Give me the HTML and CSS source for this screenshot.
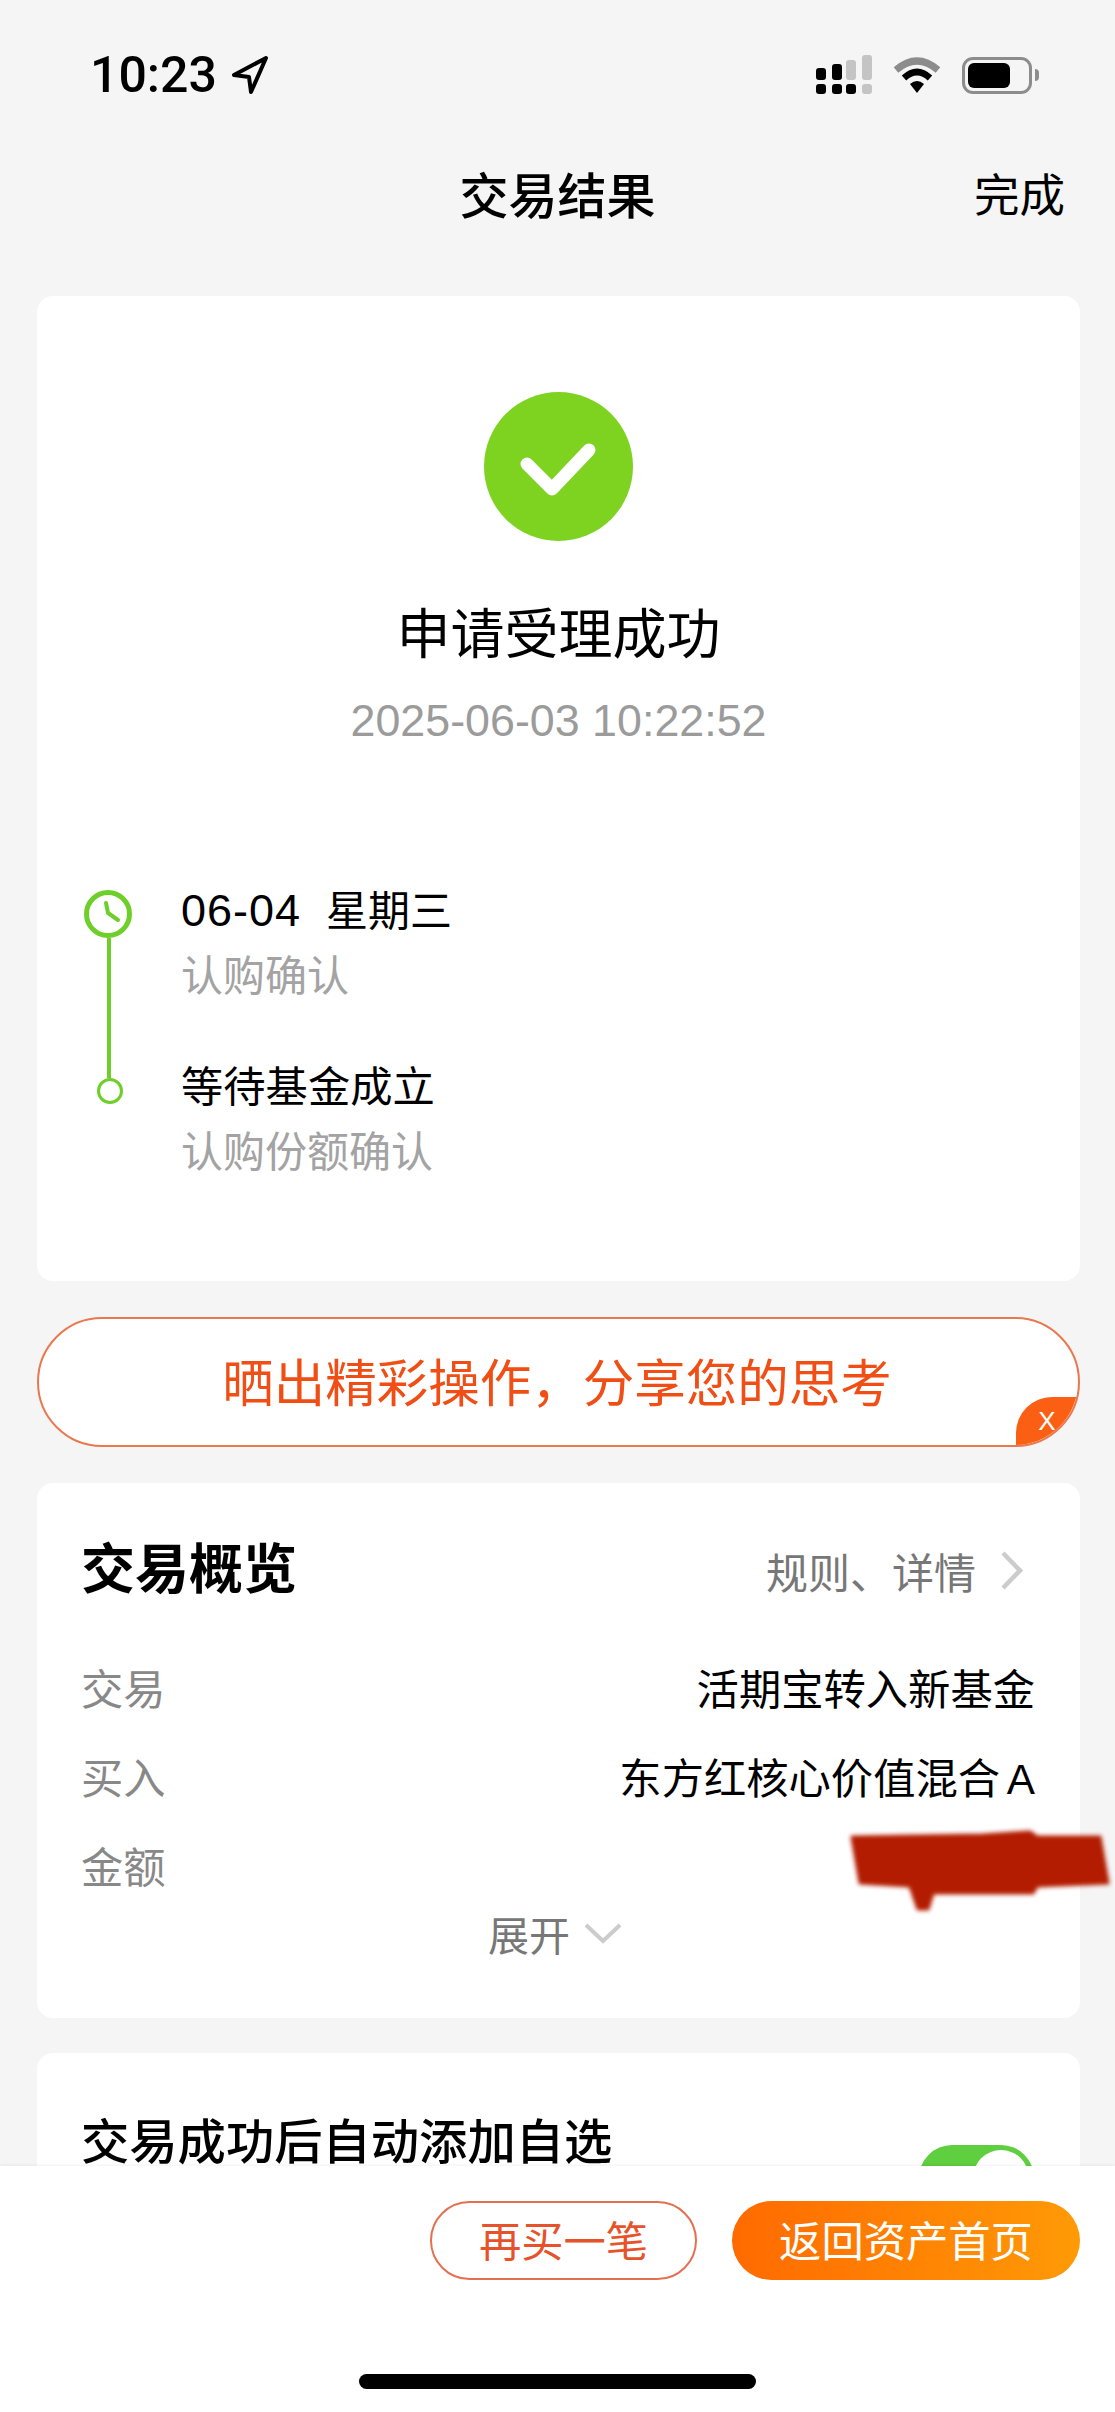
FILE: index.html
```html
<!DOCTYPE HTML>
<html lang="zh-CN">
<head>
<meta http-equiv="Content-Type" content="text/html; charset=utf-8">
<title>交易结果</title>
<link rel="stylesheet" href="styles.css">
</head>

<body>
<div class="page">

	<div class="statusBar">
		<div class="clock">
			<span>10:23</span>
			<svg class="arrow" width="38" height="38" viewBox="0 0 38 38"><path d="M35 2 L3 19 L18 21 L20 36 Z" fill="none" stroke="#000" stroke-width="4" stroke-linejoin="round"/></svg>
		</div>
		<div class="statusIcons">
			<svg width="56" height="40" viewBox="0 0 56 40">
				<rect x="0" y="29" width="10" height="10" rx="3"/>
				<rect x="16" y="29" width="10" height="10" rx="3"/>
				<rect x="30" y="29" width="10" height="10" rx="3"/>
				<rect x="46" y="29" width="10" height="10" rx="3" fill="#c4c4c4"/>
				<rect x="0" y="13" width="10" height="12" rx="3"/>
				<rect x="16" y="9" width="10" height="16" rx="3"/>
				<rect x="30" y="5" width="10" height="20" rx="3" fill="#c4c4c4"/>
				<rect x="46" y="0" width="10" height="25" rx="3" fill="#c4c4c4"/>
			</svg>
			<svg width="48" height="36" viewBox="0 0 48 36">
				<path d="M3 13 Q24 -5 45 13" fill="none" stroke="#8c8c8c" stroke-width="7"/>
				<path d="M11 21 Q24 9 37 21" fill="none" stroke="#000" stroke-width="6.5"/>
				<path d="M17 27 Q24 21 31 27 L24 36 Z"/>
			</svg>
			<div class="battery"><div class="batteryFill"></div></div>
			<div class="batteryNub"></div>
		</div>
	</div>

	<div class="navBar">
		<span></span>
		<h1 class="navTitle">交易结果</h1>
		<span class="navDone">完成</span>
	</div>

	<div class="card resultCard">
		<svg class="checkIcon" width="149" height="149" viewBox="0 0 149 149">
			<circle cx="74.5" cy="74.5" r="74.5" fill="#7ed321"/>
			<path d="M43 72 L68 97 L105 58" fill="none" stroke="#fff" stroke-width="13" stroke-linecap="round" stroke-linejoin="round"/>
		</svg>
		<div class="resultTitle">申请受理成功</div>
		<div class="resultTime">2025-06-03 10:22:52</div>

		<div class="timeline">
			<div class="rail">
				<svg width="48" height="48" viewBox="0 0 48 48">
					<circle cx="24" cy="24" r="21.5" fill="none" stroke="#6fcf2a" stroke-width="5"/>
					<path d="M22 13 L24 23 L34 30" fill="none" stroke="#6fcf2a" stroke-width="4" stroke-linecap="round" stroke-linejoin="round"/>
				</svg>
				<div class="railLine"></div>
				<div class="railDot"></div>
			</div>
			<div class="steps">
				<div class="step">
					<div class="stepTitle"><span class="stepDate">06-04</span><span class="stepWeek">星期三</span></div>
					<div class="stepSub">认购确认</div>
				</div>
				<div class="step">
					<div class="stepTitle">等待基金成立</div>
					<div class="stepSub">认购份额确认</div>
				</div>
			</div>
		</div>
	</div>

	<div class="sharePill">
		<span>晒出精彩操作，分享您的思考</span>
		<div class="shareClose">X</div>
	</div>

	<div class="card summaryCard">
		<div class="summaryHead">
			<h2 class="summaryTitle">交易概览</h2>
			<div class="summaryLink">
				<span>规则、详情</span>
				<svg width="23" height="39" viewBox="0 0 23 39"><path d="M3 2 L20 19.5 L3 37" fill="none" stroke="#ccc" stroke-width="4.5"/></svg>
			</div>
		</div>
		<div class="summaryRow"><span class="rowLabel">交易</span><span>活期宝转入新基金</span></div>
		<div class="summaryRow"><span class="rowLabel">买入</span><span class="fundName">东方红核心价值混合 A</span></div>
		<div class="summaryRow"><span class="rowLabel">金额</span></div>
		<div class="expand">
			<span>展开</span>
			<svg width="38" height="22" viewBox="0 0 38 22"><path d="M2 3 L19 19 L36 3" fill="none" stroke="#ccc" stroke-width="4"/></svg>
		</div>
		<svg class="scribble" width="280" height="100" viewBox="0 0 280 100">
			<filter id="soft"><feGaussianBlur stdDeviation="2.2"/></filter>
			<path d="M13 16 L144 14 L191 11 L198 16 L261 16 L269 62 L198 65 L194 72 L94 72 L89 88 L79 88 L71 65 L21 62 Z" fill="#b31e05" stroke="#b31e05" stroke-width="3" stroke-linejoin="round" filter="url(#soft)"/>
		</svg>
	</div>

	<div class="card autoCard">
		<div class="autoTitle">交易成功后自动添加自选</div>
		<div class="toggle"><div class="toggleKnob"></div></div>
	</div>

	<div class="bottomBar">
		<div class="bottomButtons">
			<div class="btn btnGhost">再买一笔</div>
			<div class="btn btnSolid">返回资产首页</div>
		</div>
		<div class="homeBar"></div>
	</div>

</div>
</body>
</html>
```

FILE: styles.css
```css
*{
	box-sizing:border-box;
}

body{
	margin:0;
	background:#f5f5f5;
	color:#000;
	font-family:"Liberation Sans", "Noto Sans CJK SC", sans-serif;
}

h1,h2{
	margin:0;
}

.page{
	position:relative;
	width:1115px;
	height:2412px;
	overflow:hidden;
}

/* status bar */
.statusBar{
	height:150px;
	display:flex;
	justify-content:space-between;
	align-items:center;
	padding:0 76px 0 90px;
}

.clock{
	display:flex;
	align-items:center;
	gap:14px;
	font-family:Roboto, sans-serif;
	font-weight:500;
	font-size:50px;
}

.statusIcons{
	display:flex;
	align-items:center;
}

.statusIcons svg{
	margin-right:21px;
}

.battery{
	width:70px;
	height:37px;
	border:3px solid #8c8c8c;
	border-radius:11px;
	padding:3px;
}

.batteryFill{
	width:42px;
	height:100%;
	background:#000;
	border-radius:6px;
}

.batteryNub{
	width:4px;
	height:12px;
	margin-left:3px;
	background:#8c8c8c;
	border-radius:0 6px 6px 0;
}

/* nav */
.navBar{
	height:90px;
	margin-bottom:56px;
	display:grid;
	grid-template-columns:1fr auto 1fr;
	align-items:center;
	padding:3px 50px 0;
}

.navTitle{
	font-size:49px;
	font-weight:500;
	line-height:60px;
}

.navDone{
	justify-self:end;
	font-size:45.5px;
	line-height:60px;
}

/* cards */
.card{
	width:1043px;
	margin-left:37px;
	background:#fff;
	border-radius:16px;
}

.resultCard{
	height:985px;
	padding-top:96px;
	display:flex;
	flex-direction:column;
	align-items:center;
}

.checkIcon{
	display:block;
}

.resultTitle{
	margin-top:59px;
	font-size:54px;
	line-height:70px;
}

.resultTime{
	margin-top:25px;
	font-size:44.8px;
	line-height:50px;
	color:#9b9b9b;
}

.timeline{
	align-self:stretch;
	display:flex;
	gap:49px;
	margin-top:141px;
	padding-left:47px;
}

.rail{
	width:48px;
	padding-top:4px;
	display:flex;
	flex-direction:column;
	align-items:center;
}

.rail svg{
	display:block;
}

.railLine{
	width:4px;
	height:140px;
	margin-left:2px;
	background:#6fcf2a;
}

.railDot{
	width:26px;
	height:26px;
	margin-left:3px;
	border:3px solid #6fcf2a;
	border-radius:50%;
}

.step{
	margin-bottom:61px;
}

.stepTitle{
	font-size:42.3px;
	line-height:50px;
}

.stepDate{
	font-size:45px;
	letter-spacing:1px;
}

.stepWeek{
	margin-left:25px;
	font-size:42px;
}

.stepSub{
	margin-top:15px;
	font-size:42px;
	line-height:50px;
	color:#a3a3a3;
}

/* share banner */
.sharePill{
	position:relative;
	width:1043px;
	height:130px;
	margin:36px 0 0 37px;
	padding:0 3px 6px 0;
	display:flex;
	align-items:center;
	justify-content:center;
	background:#fff;
	border:2px solid #e9784f;
	border-radius:65px;
	overflow:hidden;
	color:#f04e14;
	font-size:51.5px;
}

.shareClose{
	position:absolute;
	right:0;
	bottom:0;
	width:62px;
	height:48px;
	display:flex;
	align-items:center;
	justify-content:center;
	background:#fb5f14;
	border-top-left-radius:36px;
	color:#fff;
	font-size:26px;
}

/* summary */
.summaryCard{
	position:relative;
	height:535px;
	margin-top:36px;
	padding:57px 45px 0 44px;
}

.summaryHead{
	height:60px;
	margin-bottom:42px;
	display:flex;
	justify-content:space-between;
	align-items:center;
}

.summaryTitle{
	font-size:54px;
	font-weight:700;
	line-height:60px;
}

.summaryLink{
	display:flex;
	align-items:center;
	gap:24px;
	padding-right:12px;
	color:#777;
	font-size:42px;
}

.summaryRow{
	height:89px;
	display:flex;
	justify-content:space-between;
	align-items:center;
	font-size:42.3px;
}

.rowLabel{
	color:#888;
}

.fundName{
	word-spacing:-5px;
}

.expand{
	height:48px;
	display:flex;
	justify-content:center;
	align-items:center;
	gap:14px;
	padding-right:6px;
	color:#777;
	font-size:41px;
}

.scribble{
	position:absolute;
	left:802px;
	top:338px;
}

/* auto add */
.autoCard{
	height:300px;
	margin-top:35px;
	padding:59px 46px 0 44px;
	display:flex;
	justify-content:space-between;
	align-items:flex-start;
}

.autoTitle{
	font-size:48.3px;
	font-weight:500;
	line-height:60px;
}

.toggle{
	width:115px;
	height:66px;
	margin-top:33px;
	padding:5px;
	display:flex;
	justify-content:flex-end;
	background:#5fce3f;
	border-radius:33px;
}

.toggleKnob{
	width:56px;
	height:56px;
	background:#fff;
	border-radius:50%;
}

/* bottom bar */
.bottomBar{
	position:absolute;
	left:0;
	bottom:0;
	width:100%;
	height:246px;
	padding-top:35px;
	background:#fff;
	box-shadow:0 -1px 3px rgba(0,0,0,0.06);
}

.bottomButtons{
	display:flex;
	justify-content:flex-end;
	gap:35px;
	padding-right:35px;
}

.btn{
	height:79px;
	padding-bottom:4px;
	display:flex;
	align-items:center;
	justify-content:center;
	border-radius:40px;
	font-size:42.3px;
}

.btnGhost{
	width:267px;
	border:2px solid #e4704f;
	color:#e6532a;
}

.btnSolid{
	width:348px;
	background:linear-gradient(90deg,#ff6a00,#ff9a06);
	color:#fff;
}

.homeBar{
	width:397px;
	height:15px;
	margin:94px auto 0;
	background:#000;
	border-radius:8px;
}
```
